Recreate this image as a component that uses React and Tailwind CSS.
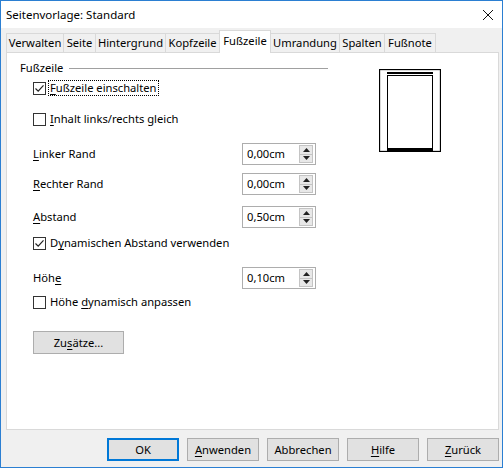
import React from 'react';

const font = { fontFamily: '"Segoe UI", "Noto Sans", sans-serif' };

const tabs = [
  { label: 'Verwalten', w: 'w-[58px]' },
  { label: 'Seite', w: 'w-[33px]' },
  { label: 'Hintergrund', w: 'w-[71px]' },
  { label: 'Kopfzeile', w: 'w-[55px]' },
  { label: 'Fußzeile', w: 'w-[52px]', active: true },
  { label: 'Umrandung', w: 'w-[70px]' },
  { label: 'Spalten', w: 'w-[46px]' },
  { label: 'Fußnote', w: 'w-[52px]' },
];

const U = ({ children }) => (
  <span className="underline decoration-1 underline-offset-[2px]">{children}</span>
);

const Checkbox = ({ checked, focus, children, className = '' }) => (
  <div className={`flex items-center h-[18px] ml-[13px] ${className}`}>
    <div className="w-[13px] h-[13px] border border-[#333333] bg-white flex items-center justify-center">
      {checked && (
        <svg width="11" height="11" viewBox="0 0 11 11">
          <path d="M1.5 5.5 L4.2 8.2 L9.5 2.3" fill="none" stroke="#222" strokeWidth="1.2" />
        </svg>
      )}
    </div>
    <div
      className={`ml-[2px] px-[1px] h-[16px] flex items-center leading-none whitespace-nowrap ${
        focus ? 'border border-dotted border-black' : 'border border-transparent'
      }`}
    >
      <span>{children}</span>
    </div>
  </div>
);

const Spin = ({ value }) => (
  <div className="w-[74px] h-[22px] border border-[#adadad] bg-white flex items-center pl-[4px] pr-[2px]">
    <span className="flex-1 leading-none">{value}</span>
    <div className="w-[14px] h-[18px] flex flex-col border border-[#c4c4c4] bg-[#e8e8e8]">
      <div className="flex-1 flex items-center justify-center border-b border-[#c4c4c4]">
        <svg width="7" height="4" viewBox="0 0 7 4">
          <path d="M0 4 L3.5 0 L7 4 Z" fill="#222" />
        </svg>
      </div>
      <div className="flex-1 flex items-center justify-center">
        <svg width="7" height="4" viewBox="0 0 7 4">
          <path d="M0 0 L3.5 4 L7 0 Z" fill="#222" />
        </svg>
      </div>
    </div>
  </div>
);

const SpinRow = ({ label, value, className = '' }) => (
  <div className={`flex items-center h-[22px] ml-[13px] ${className}`}>
    <div className="w-[209px]">{label}</div>
    <Spin value={value} />
  </div>
);

const DlgButton = ({ children, primary }) => (
  <button
    className={`w-[72px] h-[23px] bg-[#e1e1e1] flex items-center justify-center leading-none ${
      primary ? 'border-2 border-[#0078d7]' : 'border border-[#adadad]'
    }`}
  >
    <span>{children}</span>
  </button>
);

export default function App() {
  return (
    <div
      style={font}
      className="w-[503px] h-[468px] border border-[#2b7fd2] bg-[#f0f0f0] flex flex-col text-[11.2px] text-black overflow-hidden"
    >
      {/* title bar */}
      <div className="h-[27px] bg-white flex items-center pl-[5px] pr-[9px] shrink-0 text-[11.5px]">
        <span className="flex-1">Seitenvorlage: Standard</span>
        <svg width="10" height="10" viewBox="0 0 10 10">
          <path d="M0 0 L10 10 M10 0 L0 10" stroke="#111" strokeWidth="1" />
        </svg>
      </div>

      {/* tabs */}
      <div className="mt-[2px] pl-[5px] h-[23px] flex items-end relative z-10 -mb-px shrink-0">
        {tabs.map((t) =>
          t.active ? (
            <div
              key={t.label}
              className={`${t.w} h-[23px] -ml-px bg-white border border-b-0 border-[#d9d9d9] flex items-center justify-center pb-[1px] whitespace-nowrap`}
            >
              {t.label}
            </div>
          ) : (
            <div
              key={t.label}
              className={`${t.w} h-[20px] bg-[#f0f0f0] border border-[#d9d9d9] -ml-px first:ml-0 flex items-center justify-center whitespace-nowrap`}
            >
              {t.label}
            </div>
          )
        )}
      </div>

      {/* panel */}
      <div className="ml-[5px] w-[493px] h-[378px] bg-white border border-[#d9d9d9] shrink-0 flex pl-[13px] pt-[7px]">
        <div className="w-[308px] flex flex-col">
          <div className="h-[16px] flex items-center">
            <span>Fußzeile</span>
            <div className="flex-1 h-px bg-[#a0a0a0] ml-[6px]" />
          </div>

          <Checkbox checked focus className="mt-[3px]">
            <U>F</U>ußzeile einschalten
          </Checkbox>
          <Checkbox className="mt-[13px]">
            <U>I</U>nhalt links/rechts gleich
          </Checkbox>

          <SpinRow className="mt-[15px]" label={<><U>L</U>inker Rand</>} value="0,00cm" />
          <SpinRow className="mt-[8px]" label={<><U>R</U>echter Rand</>} value="0,00cm" />
          <SpinRow className="mt-[11px]" label={<><U>A</U>bstand</>} value="0,50cm" />

          <Checkbox checked className="mt-[6px]">
            D<U>y</U>namischen Abstand verwenden
          </Checkbox>

          <SpinRow className="mt-[15px]" label={<>Höh<U>e</U></>} value="0,10cm" />

          <Checkbox className="mt-[4px]">
            Höhe <U>d</U>ynamisch anpassen
          </Checkbox>

          <button className="mt-[20px] ml-[13px] w-[91px] h-[23px] bg-[#e1e1e1] border border-[#adadad] flex items-center justify-center leading-none">
            <span>
              Zu<U>s</U>ätze...
            </span>
          </button>
        </div>

        {/* page preview */}
        <div className="ml-[51px] mt-[9px]">
          <svg width="62" height="83" viewBox="0 0 62 83">
            <rect x="0.5" y="0.5" width="61" height="82" fill="white" stroke="#000" strokeWidth="1.3" />
            <rect x="8" y="3" width="46" height="2" fill="#000" />
            <rect x="8.5" y="6.5" width="45" height="73" fill="white" stroke="#000" strokeWidth="1" />
            <rect x="8" y="80" width="46" height="2" fill="#000" />
          </svg>
        </div>
      </div>

      {/* dialog buttons */}
      <div className="mt-[8px] pr-[3px] flex justify-end gap-[8px] shrink-0">
        <DlgButton primary>OK</DlgButton>
        <DlgButton>
          <U>A</U>nwenden
        </DlgButton>
        <DlgButton>Abbrechen</DlgButton>
        <DlgButton>
          <U>H</U>ilfe
        </DlgButton>
        <DlgButton>
          <U>Z</U>urück
        </DlgButton>
      </div>
    </div>
  );
}
